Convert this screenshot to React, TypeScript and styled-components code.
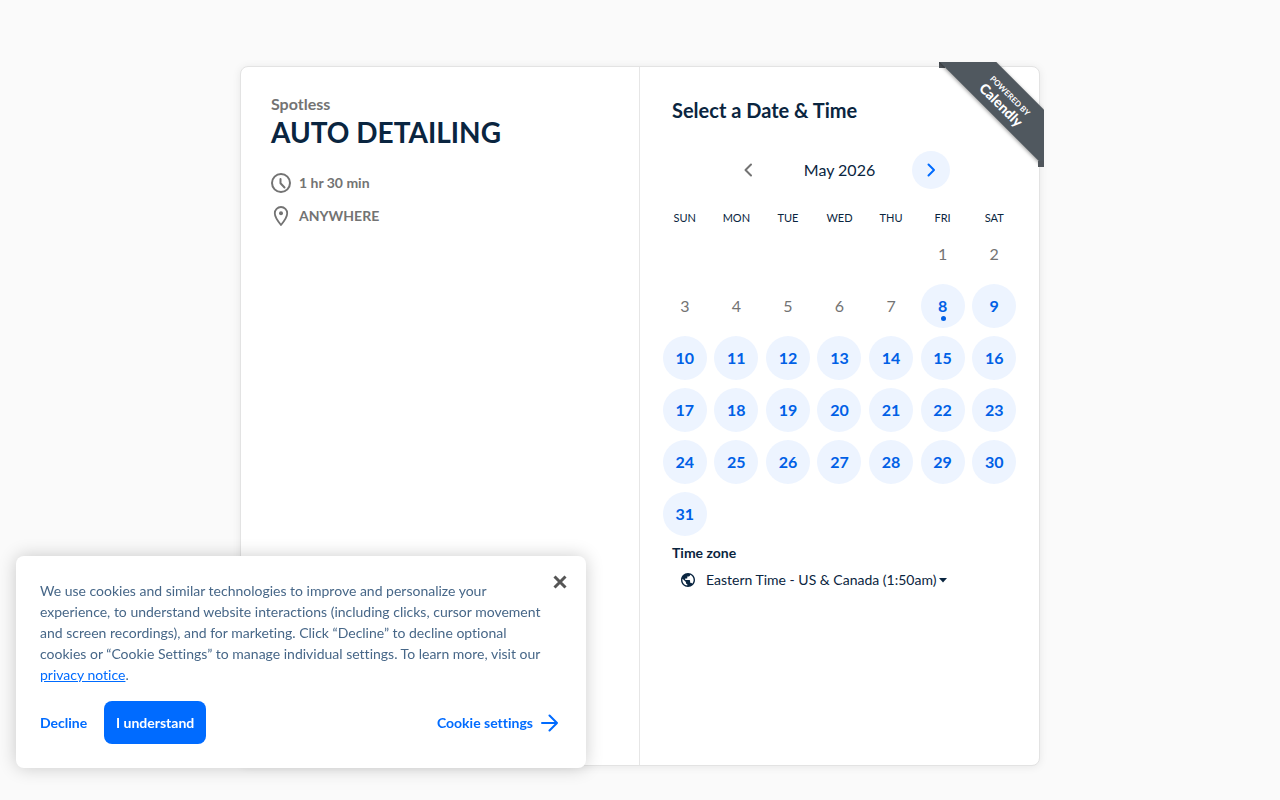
import React from "react";
import styled, { createGlobalStyle } from "styled-components";

const GlobalStyle = createGlobalStyle`
  *, *::before, *::after { box-sizing: border-box; }
  body {
    margin: 0;
    background: #fafafa;
    color: #0a2540;
    font-family: Lato, "Liberation Sans", sans-serif;
    font-size: 14px;
    font-variant-ligatures: none;
    line-height: 20px;
  }
  h1, h2, p { margin: 0; }
  button { font: inherit; font-variant-ligatures: none; border: 0; padding: 0; background: none; cursor: pointer; }
`;

const Page = styled.main`
  display: flex;
  justify-content: center;
  padding: 66px 16px 34px;
`;

const Card = styled.div`
  position: relative;
  display: grid;
  grid-template-columns: 1fr 1fr;
  width: 100%;
  max-width: 800px;
  min-height: 700px;
  background: #fff;
  border: 1px solid #e3e3e3;
  border-radius: 8px;
  box-shadow: 0 1px 8px rgba(0, 0, 0, 0.08);
`;

const Details = styled.section`
  padding: 27px 30px;
  border-right: 1px solid #e6e6e6;
`;

const Host = styled.p`
  color: #737373;
  font-size: 16px;
  font-weight: 700;
`;

const EventName = styled.h1`
  font-size: 28px;
  line-height: 36px;
  font-weight: 700;
`;

const Facts = styled.div`
  display: grid;
  gap: 12px;
  margin-top: 22px;
`;

const Fact = styled.div`
  display: flex;
  align-items: center;
  gap: 8px;
  height: 21px;
  color: #737373;
  font-weight: 700;
`;

const Booking = styled.section`
  padding: 31px 19px;
`;

const Heading = styled.h2`
  padding: 0 13px;
  font-size: 20px;
  line-height: 24px;
  font-weight: 700;
`;

const MonthNav = styled.div`
  display: flex;
  align-items: center;
  justify-content: center;
  gap: 36px;
  margin-top: 29px;
`;

const MonthLabel = styled.span`
  min-width: 72px;
  text-align: center;
  font-size: 16px;
`;

const ArrowButton = styled.button<{ $active?: boolean }>`
  display: grid;
  place-items: center;
  width: 38px;
  height: 38px;
  border-radius: 50%;
  color: ${(p) => (p.$active ? "#006bff" : "#737373")};
  background: ${(p) => (p.$active ? "#edf4ff" : "transparent")};
`;

const Calendar = styled.table`
  width: 100%;
  margin-top: 18px;
  table-layout: fixed;
  border-collapse: collapse;
`;

const Weekday = styled.th`
  height: 21px;
  padding: 0;
  font-size: 11px;
  line-height: 20px;
  font-weight: 400;
`;

const DayCell = styled.td`
  height: 52px;
  padding: 0;
`;

const Day = styled.button<{ $open: boolean }>`
  position: relative;
  display: grid;
  place-items: center;
  width: 44px;
  height: 44px;
  margin: 0 auto;
  border-radius: 50%;
  font-size: 16px;
  font-weight: ${(p) => (p.$open ? 700 : 400)};
  color: ${(p) => (p.$open ? "#0060e6" : "#737373")};
  background: ${(p) => (p.$open ? "#edf4ff" : "transparent")};
`;

const TodayDot = styled.span`
  position: absolute;
  left: 20px;
  bottom: 7px;
  width: 5px;
  height: 5px;
  border-radius: 50%;
  background: #0060e6;
`;

const ZoneTitle = styled.p`
  padding: 3px 13px 0;
  font-weight: 700;
`;

const ZoneButton = styled.button`
  display: flex;
  align-items: center;
  margin: 7px 0 0 22px;
  color: inherit;
`;

const ZoneName = styled.span`
  margin: 0 3px 0 11px;
`;

const Ribbon = styled.a`
  position: absolute;
  top: -5px;
  right: -5px;
  width: 105px;
  height: 105px;
  overflow: hidden;
  color: #fff;
  text-align: center;
  text-decoration: none;

  &::before, &::after {
    content: "";
    position: absolute;
    width: 6px;
    height: 6px;
    background: #50565c;
  }
  &::before { top: 0; left: 0; }
  &::after { right: 0; bottom: 0; }
`;

const RibbonBand = styled.span`
  position: absolute;
  top: 18px;
  left: -13px;
  width: 160px;
  height: 40px;
  padding-top: 9px;
  background: #50585f;
  box-shadow: 0 1px 4px rgba(0, 0, 0, 0.4);
  transform: rotate(45deg);
`;

const RibbonSmall = styled.span`
  display: block;
  font-size: 8px;
  line-height: 10px;
  font-weight: 700;
`;

const RibbonBrand = styled.span`
  display: block;
  font-size: 14px;
  line-height: 16px;
  font-weight: 900;
`;

const CookieBanner = styled.aside`
  position: fixed;
  left: 16px;
  bottom: 32px;
  width: 570px;
  max-width: calc(100% - 32px);
  padding: 24px;
  background: #fff;
  border-radius: 8px;
  box-shadow: 0 0 18px rgba(0, 0, 0, 0.2);
`;

const CookieText = styled.p`
  padding-right: 12px;
  color: #476788;
  line-height: 21px;

  a { color: #006bff; text-decoration: underline; }
`;

const CloseButton = styled.button`
  position: absolute;
  top: 16px;
  right: 16px;
  display: grid;
  place-items: center;
  width: 20px;
  height: 20px;
  color: #565656;
`;

const CookieActions = styled.div`
  display: flex;
  align-items: center;
  gap: 16px;
  margin-top: 16px;
`;

const TextButton = styled.button<{ $end?: boolean }>`
  display: flex;
  align-items: center;
  gap: 8px;
  margin-left: ${(p) => (p.$end ? "auto" : "0")};
  margin-right: ${(p) => (p.$end ? "4px" : "0")};
  min-width: 48px;
  color: #006bff;
  font-weight: 700;
`;

const PrimaryButton = styled.button`
  height: 43px;
  padding: 0 12px;
  border-radius: 8px;
  color: #fff;
  background: #006bff;
  font-weight: 700;
`;

const WEEKDAYS = ["SUN", "MON", "TUE", "WED", "THU", "FRI", "SAT"];
const FIRST_WEEKDAY = 5;
const DAYS_IN_MONTH = 31;
const TODAY = 8;

const weeks = Array.from({ length: 6 }, (_, week) =>
  WEEKDAYS.map((_, i) => {
    const day = week * 7 + i - FIRST_WEEKDAY + 1;
    return day >= 1 && day <= DAYS_IN_MONTH ? day : null;
  })
);

const ClockIcon = () => (
  <svg width="20" height="20" viewBox="0 0 20 20" fill="none" stroke="currentColor" strokeWidth="2" strokeLinecap="round" strokeLinejoin="round" aria-hidden="true">
    <circle cx="10" cy="10" r="9" />
    <path d="M9.500 6v4.300l4 4.200" />
  </svg>
);

const PinIcon = () => (
  <svg width="20" height="20" viewBox="0 0 20 20" fill="none" stroke="currentColor" strokeWidth="1.8" strokeLinejoin="round" aria-hidden="true">
    <path d="M10 1a6.2 6.2 0 0 1 6.2 6.3c0 3.8-3.6 8.6-6.2 11.7C7.4 15.900 3.8 11.1 3.8 7.3A6.2 6.2 0 0 1 10 1Z" />
    <circle cx="10" cy="7.3" r="2" fill="currentColor" stroke="none" />
  </svg>
);

const Chevron = ({ left }: { left?: boolean }) => (
  <svg width="10" height="14" viewBox="0 0 10 14" fill="none" stroke="currentColor" strokeWidth="2" strokeLinecap="round" strokeLinejoin="round" aria-hidden="true">
    <path d={left ? "M7 1.5 1.500 7 7 12.5" : "M2.500 1.5 8 7l-5.500 5.5"} />
  </svg>
);

const GlobeIcon = () => (
  <svg width="14" height="14" viewBox="2 2 20 20" fill="currentColor" aria-hidden="true">
    <path d="M12 2C6.48 2 2 6.48 2 12s4.48 10 10 10 10-4.48 10-10S17.52 2 12 2zm-1 17.93c-3.95-.49-7-3.85-7-7.93 0-.62.08-1.21.21-1.79L9 15v1c0 1.1.9 2 2 2v1.930zm6.9-2.54c-.26-.81-1-1.39-1.9-1.39h-1v-3c0-.55-.45-1-1-1H8v-2h2c.55 0 1-.45 1-1V7h2c1.1 0 2-.9 2-2v-.41c2.93 1.19 5 4.06 5 7.41 0 2.08-.8 3.97-2.1 5.39z" />
  </svg>
);

const CaretIcon = () => (
  <svg width="8" height="5" viewBox="0 0 8 5" fill="currentColor" aria-hidden="true">
    <path d="M0 0h8L4 4.5Z" />
  </svg>
);

const CloseIcon = () => (
  <svg width="14" height="14" viewBox="0 0 14 14" fill="none" stroke="currentColor" strokeWidth="3" aria-hidden="true">
    <path d="M1.5 1.5l11 11M12.5 1.5l-11 11" />
  </svg>
);

const ArrowIcon = () => (
  <svg width="17" height="18" viewBox="0 0 17 18" fill="none" stroke="currentColor" strokeWidth="2" strokeLinecap="round" strokeLinejoin="round" aria-hidden="true">
    <path d="M1 9h15M8.5 1.5 16 9l-7.5 7.5" />
  </svg>
);

export default function App() {
  return (
    <>
      <GlobalStyle />
      <Page>
        <Card>
          <Details>
            <Host>Spotless</Host>
            <EventName>AUTO DETAILING</EventName>
            <Facts>
              <Fact><ClockIcon />1 hr 30 min</Fact>
              <Fact><PinIcon />ANYWHERE</Fact>
            </Facts>
          </Details>
          <Booking>
            <Heading>Select a Date &amp; Time</Heading>
            <MonthNav>
              <ArrowButton type="button" aria-label="Previous month"><Chevron left /></ArrowButton>
              <MonthLabel>May 2026</MonthLabel>
              <ArrowButton type="button" $active aria-label="Next month"><Chevron /></ArrowButton>
            </MonthNav>
            <Calendar>
              <thead>
                <tr>{WEEKDAYS.map((name) => <Weekday key={name} scope="col">{name}</Weekday>)}</tr>
              </thead>
              <tbody>
                {weeks.map((week, row) => (
                  <tr key={row}>
                    {week.map((day, col) => (
                      <DayCell key={col}>
                        {day && (
                          <Day type="button" $open={day >= TODAY} disabled={day < TODAY}>
                            {day}
                            {day === TODAY && <TodayDot />}
                          </Day>
                        )}
                      </DayCell>
                    ))}
                  </tr>
                ))}
              </tbody>
            </Calendar>
            <ZoneTitle id="zone-title">Time zone</ZoneTitle>
            <ZoneButton type="button" aria-describedby="zone-title">
              <GlobeIcon />
              <ZoneName>Eastern Time - US &amp; Canada (1:50am)</ZoneName>
              <CaretIcon />
            </ZoneButton>
          </Booking>
          <Ribbon href="#calendly">
            <RibbonBand>
              <RibbonSmall>POWERED BY</RibbonSmall>
              <RibbonBrand>Calendly</RibbonBrand>
            </RibbonBand>
          </Ribbon>
        </Card>
      </Page>
      <CookieBanner aria-label="Cookies">
        <CookieText>
          We use cookies and similar technologies to improve and personalize your experience, to understand website
          interactions (including clicks, cursor movement and screen recordings), and for marketing. Click “Decline” to
          decline optional cookies or “Cookie Settings” to manage individual settings. To learn more, visit our{" "}
          <a href="#privacy">privacy notice</a>.
        </CookieText>
        <CookieActions>
          <TextButton type="button">Decline</TextButton>
          <PrimaryButton type="button">I understand</PrimaryButton>
          <TextButton type="button" $end>Cookie settings<ArrowIcon /></TextButton>
        </CookieActions>
        <CloseButton type="button" aria-label="Close"><CloseIcon /></CloseButton>
      </CookieBanner>
    </>
  );
}
